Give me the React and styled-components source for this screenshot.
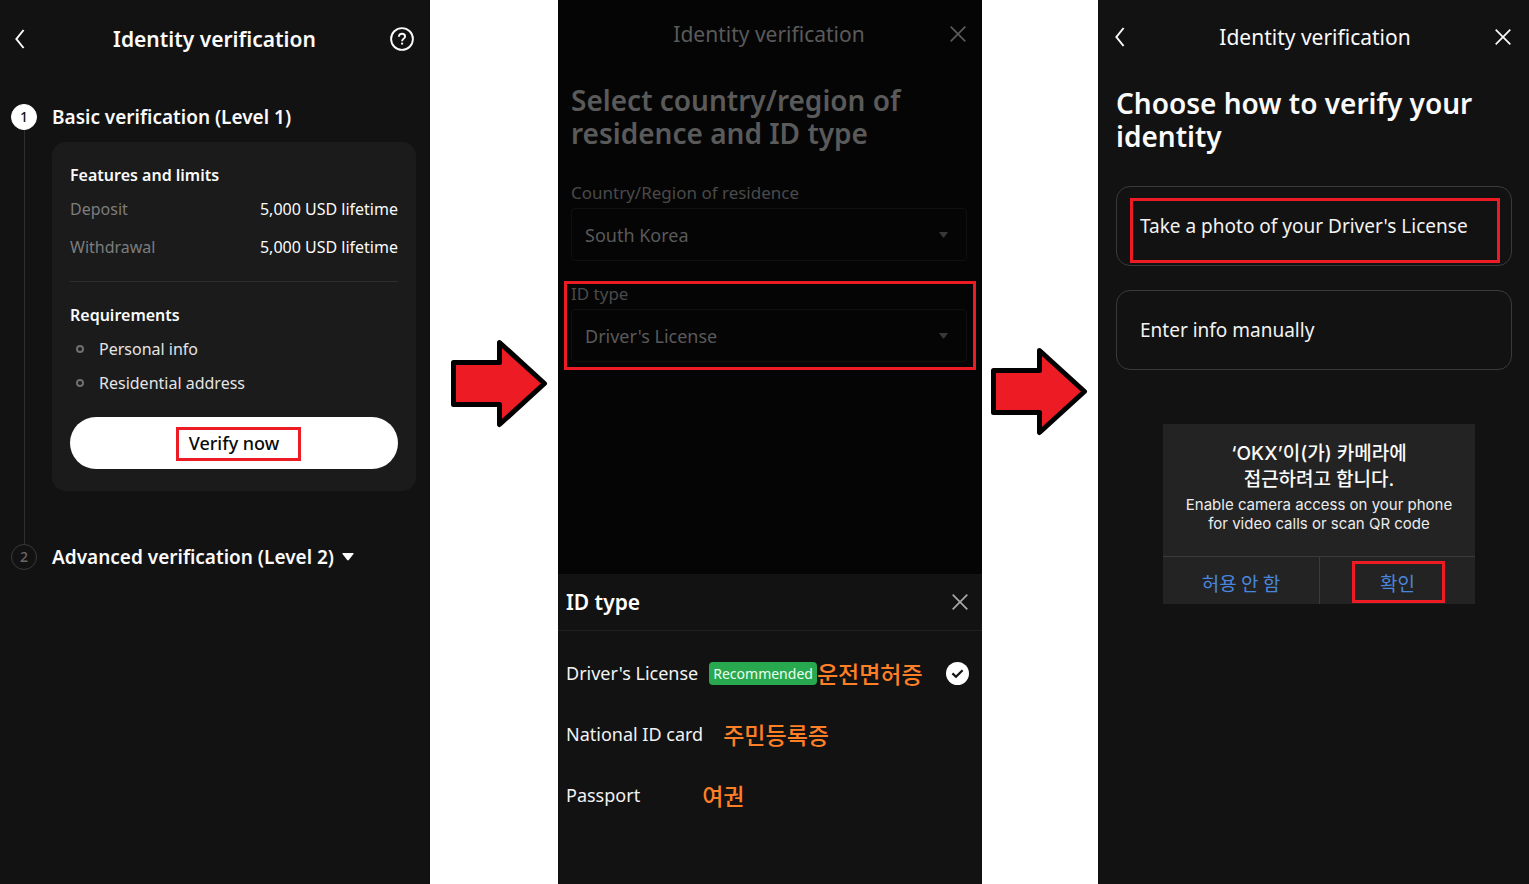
import React from "react";
import styled, { createGlobalStyle } from "styled-components";

const GlobalStyle = createGlobalStyle`
  *, *::before { box-sizing: border-box; }
  body { margin: 0; background: #fff; }
  body, button, select, input {
    font-family: "Noto Sans", "Noto Sans CJK KR", sans-serif;
  }
  h1, h2, h3, p, ul, dl, dd { margin: 0; padding: 0; }
  button {
    border: 0;
    padding: 0;
    background: none;
    color: inherit;
    cursor: pointer;
  }
  svg { display: block; }
`;

const Page = styled.main`
  display: grid;
  grid-template-columns: 430fr 128px 424fr 116px 431fr;
  min-height: 100vh;
`;

const Screen = styled.section`
  display: flex;
  flex-direction: column;
  min-width: 0;
  background: ${(p) => (p.$dimmed ? "#050505" : "#121212")};
  color: ${(p) => (p.$dimmed ? "#5a5a5a" : "#fafafa")};
`;

const ArrowCell = styled.div`
  display: flex;
  justify-content: flex-end;
  padding: ${(p) => p.$top}px 10px 0 0;
`;

const TopBar = styled.header`
  display: grid;
  grid-template-columns: 24px 1fr 24px;
  align-items: center;
  height: ${(p) => p.$height}px;
  padding: 0 ${(p) => p.$right}px 0 ${(p) => p.$left}px;
`;

const TopTitle = styled.h1`
  grid-column: 2;
  text-align: center;
  font-size: 21px;
  line-height: 28px;
  font-weight: ${(p) => (p.$strong ? 600 : 400)};
  white-space: nowrap;
`;

const IconButton = styled.button`
  display: flex;
  justify-content: ${(p) => p.$align || "center"};
  align-items: center;
  width: 24px;
  height: 24px;
`;

const Steps = styled.div`
  padding: 26px 14px 0 11px;
`;

const Step = styled.div`
  display: grid;
  grid-template-columns: 26px 1fr;
  column-gap: 15px;
`;

const Rail = styled.div`
  display: flex;
  flex-direction: column;
  align-items: center;
`;

const StepNumber = styled.span`
  width: 26px;
  height: 26px;
  border-radius: 50%;
  border: 1px solid ${(p) => (p.$active ? "#fff" : "#3a3a3a")};
  background: ${(p) => (p.$active ? "#fff" : "transparent")};
  color: ${(p) => (p.$active ? "#121212" : "#6a6a6a")};
  font-size: 14px;
  line-height: 24px;
  font-weight: 500;
  text-align: center;
`;

const RailLine = styled.span`
  flex: 1;
  width: 1px;
  background: #2e2e2e;
`;

const StepBody = styled.div`
  padding-bottom: ${(p) => (p.$last ? 0 : 53)}px;
`;

const StepTitle = styled.h2`
  font-size: 19px;
  line-height: 26px;
  font-weight: 600;
  white-space: nowrap;
`;

const StepToggle = styled.button`
  display: flex;
  align-items: center;
  gap: 8px;
  font: inherit;
`;

const Card = styled.div`
  margin-top: 12px;
  padding: 22px 18px;
  border-radius: 14px;
  background: #1b1b1b;
  font-size: 16px;
  line-height: 22px;
`;

const CardHeading = styled.h3`
  font-size: 16px;
  line-height: 22px;
  font-weight: 600;
`;

const Limits = styled.dl`
  display: grid;
  gap: 16px;
  padding: 12px 0 23px;
  border-bottom: 1px solid #2e2e2e;
  margin-bottom: 22px;
`;

const Limit = styled.div`
  display: flex;
  justify-content: space-between;
`;

const LimitName = styled.dt`
  color: #7d7d7d;
`;

const Requirements = styled.ul`
  display: grid;
  gap: 12px;
  padding: 12px 0 23px;
  list-style: none;
`;

const Requirement = styled.li`
  display: flex;
  align-items: center;
  gap: 15px;
  padding-left: 6px;
  color: #e4e4e4;

  &::before {
    content: "";
    width: 8px;
    height: 8px;
    border: 2px solid #6f6f6f;
    border-radius: 50%;
  }
`;

const PrimaryButton = styled.button`
  position: relative;
  width: 100%;
  height: 52px;
  border-radius: 26px;
  background: #fff;
  color: #0a0a0a;
  font-size: 18px;
  line-height: 26px;
  font-weight: 500;
`;

const Mark = styled.span`
  position: absolute;
  inset: ${(p) => p.$inset};
  border: 3px solid #ed1c24;
  pointer-events: none;
`;

const Content = styled.div`
  padding: ${(p) => p.$padding};
`;

const Headline = styled.h2`
  font-size: 28px;
  line-height: 33px;
  font-weight: 600;
`;

const Field = styled.div`
  position: relative;
  margin-top: ${(p) => p.$gap}px;
`;

const FieldLabel = styled.label`
  display: block;
  margin-bottom: 3px;
  font-size: 17px;
  line-height: 24px;
  color: #4a4a4a;
`;

const SelectBox = styled.div`
  display: grid;
  align-items: center;

  > * { grid-area: 1 / 1; }
  > svg {
    justify-self: end;
    margin-right: 19px;
    color: #383838;
    pointer-events: none;
  }
`;

const Select = styled.select`
  appearance: none;
  width: 100%;
  height: 53px;
  padding: 0 40px 0 13px;
  border: 1px solid #101010;
  border-radius: 4px;
  background: transparent;
  color: #5a5a5a;
  font-size: 18px;
`;

const Sheet = styled.div`
  margin-top: auto;
  min-height: 310px;
  background: #121212;
  color: #f2f2f2;
`;

const SheetHeader = styled.div`
  display: flex;
  align-items: center;
  justify-content: space-between;
  height: 57px;
  padding: 0 10px 0 8px;
  border-bottom: 1px solid #202020;
  color: #a8a8a8;
`;

const SheetTitle = styled.h2`
  color: #fff;
  font-size: 21px;
  line-height: 28px;
  font-weight: 600;
`;

const Options = styled.div`
  display: grid;
  gap: 35px;
  padding: 29px 13px 0 8px;
`;

const Option = styled.label`
  display: flex;
  align-items: center;
  height: 26px;
  font-size: 18px;
  line-height: 26px;
  white-space: nowrap;
`;

const Badge = styled.span`
  margin-left: 11px;
  padding: 0 4px;
  border-radius: 4px;
  background: #28a84f;
  color: #e8fff0;
  font-size: 14px;
  line-height: 23px;
`;

const Translation = styled.span`
  margin-left: ${(p) => p.$gap}px;
  color: #ff7f27;
  font-family: "Noto Sans CJK KR", sans-serif;
  font-size: 23px;
  font-weight: 500;
`;

const RadioMark = styled.span`
  display: grid;
  place-items: center;
  margin-left: auto;

  > * { grid-area: 1 / 1; }
  > svg { pointer-events: none; visibility: hidden; }
  > input:checked + svg { visibility: visible; }
`;

const Radio = styled.input`
  appearance: none;
  width: 23px;
  height: 23px;
  margin: 0;
  border-radius: 50%;

  &:checked { background: #fff; }
`;

const Choices = styled.div`
  display: grid;
  gap: 24px;
  margin-top: 33px;
`;

const Choice = styled.button`
  position: relative;
  height: 80px;
  padding: 0 23px;
  border: 1px solid #3a3a3a;
  border-radius: 14px;
  color: #f2f2f2;
  text-align: left;
  font-size: 19px;
  line-height: 26px;
  white-space: nowrap;
`;

const Dialog = styled.div`
  margin: 54px 54px 0 65px;
  background: #232323;
  text-align: center;
`;

const DialogBody = styled.div`
  height: 132px;
  padding-top: 17px;
`;

const DialogTitle = styled.h2`
  font-family: Inter, "Noto Sans CJK KR", sans-serif;
  font-size: 19px;
  line-height: 26px;
  font-weight: 500;
`;

const DialogText = styled.p`
  margin-top: 2px;
  font-family: Inter, sans-serif;
  font-size: 15px;
  line-height: 19px;
  color: #ececec;
`;

const DialogActions = styled.div`
  display: grid;
  grid-template-columns: 1fr 1fr;
  border-top: 1px solid #3b3b3b;
`;

const DialogButton = styled.button`
  position: relative;
  height: 47px;
  padding-top: 3px;
  color: #4a86dc;
  font-family: "Noto Sans CJK KR", sans-serif;
  font-size: 19px;

  & + & { border-left: 1px solid #3b3b3b; }
`;

const BackIcon = () => (
  <svg width="10" height="20" viewBox="0 0 10 20" fill="none" stroke="currentColor" strokeWidth="2" aria-hidden="true">
    <path d="M8.6 1 1.4 10l7.2 9" />
  </svg>
);

const CloseIcon = () => (
  <svg width="16" height="16" viewBox="0 0 16 16" fill="none" stroke="currentColor" strokeWidth="1.7" aria-hidden="true">
    <path d="M.7.7l14.6 14.6M15.3.7.7 15.3" />
  </svg>
);

const HelpIcon = () => (
  <svg width="24" height="24" viewBox="0 0 24 24" fill="none" stroke="currentColor" strokeWidth="1.9" aria-hidden="true">
    <circle cx="12" cy="12" r="10.9" />
    <path d="M8.9 9.7c0-1.9 1.3-3 3.1-3s3.1 1.1 3.1 2.7c0 2.2-3 2.3-3 4.8" />
    <path d="M11.1 16.6h2" />
  </svg>
);

const Caret = ({ width, height }) => (
  <svg width={width} height={height} viewBox="0 0 12 9" preserveAspectRatio="none" fill="currentColor" aria-hidden="true">
    <path d="M1 0h10q1 0 .5 1L6.8 8q-.8 1-1.6 0L.5 1Q0 0 1 0z" />
  </svg>
);

const CheckIcon = () => (
  <svg width="13" height="11" viewBox="0 0 13 11" fill="none" stroke="#121212" strokeWidth="2.2" aria-hidden="true">
    <path d="M1.4 5.4 5 8.8l6.600-6.600" />
  </svg>
);

const RedArrow = () => (
  <svg width="98" height="90" viewBox="0 0 98 90" aria-hidden="true">
    <path
      d="M3.500 23.500H49.500V3.500L94.500 44.500 49.500 85.500V65.500H3.500z"
      fill="#ed1c24"
      stroke="#000"
      strokeWidth="5"
      strokeLinejoin="round"
    />
  </svg>
);

const limits = [
  ["Deposit", "5,000 USD lifetime"],
  ["Withdrawal", "5,000 USD lifetime"],
];

const idTypes = [
  { name: "Driver's License", badge: "Recommended", korean: "운전면허증", gap: 0 },
  { name: "National ID card", korean: "주민등록증", gap: 20 },
  { name: "Passport", korean: "여권", gap: 62 },
];

export default function App() {
  return (
    <>
      <GlobalStyle />
      <Page>
        <Screen>
          <TopBar $height={78} $left={15} $right={16}>
            <IconButton aria-label="Back" $align="flex-start"><BackIcon /></IconButton>
            <TopTitle $strong>Identity verification</TopTitle>
            <IconButton aria-label="Help"><HelpIcon /></IconButton>
          </TopBar>
          <Steps>
            <Step>
              <Rail>
                <StepNumber $active>1</StepNumber>
                <RailLine />
              </Rail>
              <StepBody>
                <StepTitle>Basic verification (Level 1)</StepTitle>
                <Card>
                  <CardHeading>Features and limits</CardHeading>
                  <Limits>
                    {limits.map(([name, value]) => (
                      <Limit key={name}>
                        <LimitName>{name}</LimitName>
                        <dd>{value}</dd>
                      </Limit>
                    ))}
                  </Limits>
                  <CardHeading>Requirements</CardHeading>
                  <Requirements>
                    <Requirement>Personal info</Requirement>
                    <Requirement>Residential address</Requirement>
                  </Requirements>
                  <PrimaryButton>
                    Verify now
                    <Mark $inset="10px 97px 8px 106px" />
                  </PrimaryButton>
                </Card>
              </StepBody>
            </Step>
            <Step>
              <Rail><StepNumber>2</StepNumber></Rail>
              <StepBody $last>
                <StepTitle>
                  <StepToggle aria-expanded="false">
                    Advanced verification (Level 2)
                    <Caret width={12} height={8} />
                  </StepToggle>
                </StepTitle>
              </StepBody>
            </Step>
          </Steps>
        </Screen>

        <ArrowCell $top={339}><RedArrow /></ArrowCell>

        <Screen $dimmed>
          <TopBar $height={68} $left={10} $right={12}>
            <TopTitle>Identity verification</TopTitle>
            <IconButton aria-label="Close"><CloseIcon /></IconButton>
          </TopBar>
          <Content $padding="16px 15px 0 13px">
            <Headline>Select country/region of residence and ID type</Headline>
            <Field $gap={31}>
              <FieldLabel htmlFor="country">Country/Region of residence</FieldLabel>
              <SelectBox>
                <Select id="country"><option>South Korea</option></Select>
                <Caret width={9} height={6} />
              </SelectBox>
            </Field>
            <Field $gap={21}>
              <FieldLabel htmlFor="id-type">ID type</FieldLabel>
              <SelectBox>
                <Select id="id-type"><option>Driver's License</option></Select>
                <Caret width={9} height={6} />
              </SelectBox>
              <Mark $inset="-1px -9px -8px -7px" />
            </Field>
          </Content>
          <Sheet>
            <SheetHeader>
              <SheetTitle>ID type</SheetTitle>
              <IconButton aria-label="Close ID type"><CloseIcon /></IconButton>
            </SheetHeader>
            <Options>
              {idTypes.map((type, i) => (
                <Option key={type.name}>
                  {type.name}
                  {type.badge && <Badge>{type.badge}</Badge>}
                  <Translation $gap={type.gap}>{type.korean}</Translation>
                  <RadioMark>
                    <Radio type="radio" name="id-option" defaultChecked={i === 0} />
                    <CheckIcon />
                  </RadioMark>
                </Option>
              ))}
            </Options>
          </Sheet>
        </Screen>

        <ArrowCell $top={347}><RedArrow /></ArrowCell>

        <Screen>
          <TopBar $height={74} $left={17} $right={14}>
            <IconButton aria-label="Back" $align="flex-start"><BackIcon /></IconButton>
            <TopTitle>Identity verification</TopTitle>
            <IconButton aria-label="Close"><CloseIcon /></IconButton>
          </TopBar>
          <Content $padding="13px 17px 0 18px">
            <Headline>Choose how to verify your identity</Headline>
            <Choices>
              <Choice>
                Take a photo of your Driver's License
                <Mark $inset="11px 11px 2px 13px" />
              </Choice>
              <Choice>Enter info manually</Choice>
            </Choices>
          </Content>
          <Dialog role="dialog" aria-labelledby="camera-title">
            <DialogBody>
              <DialogTitle id="camera-title">
                ‘OKX’이(가) 카메라에
                <br />
                접근하려고 합니다.
              </DialogTitle>
              <DialogText>
                Enable camera access on your phone
                <br />
                for video calls or scan QR code
              </DialogText>
            </DialogBody>
            <DialogActions>
              <DialogButton>허용 안 함</DialogButton>
              <DialogButton>
                확인
                <Mark $inset="4px 30px 1px 32px" />
              </DialogButton>
            </DialogActions>
          </Dialog>
        </Screen>
      </Page>
    </>
  );
}
